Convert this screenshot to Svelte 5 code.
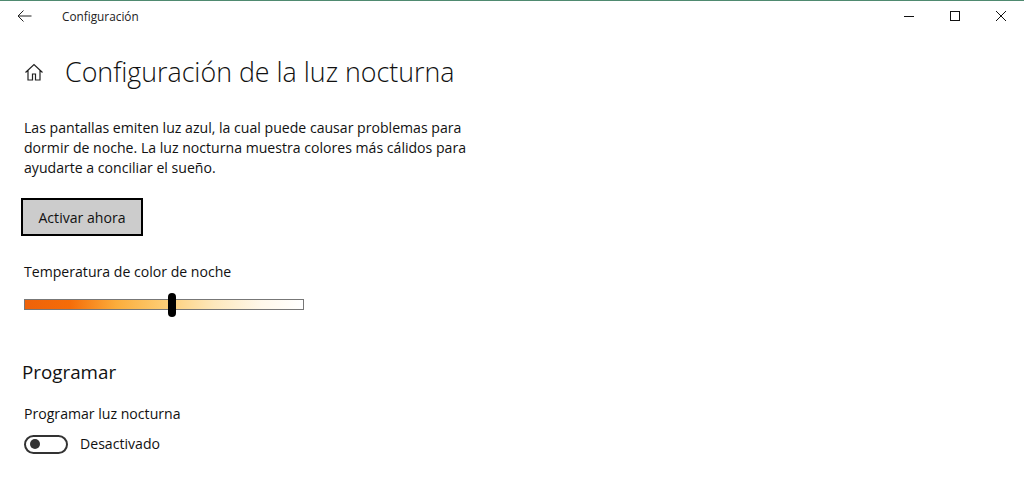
<script>
  const intro = 'Las pantallas emiten luz azul, la cual puede causar problemas para dormir de noche. La luz nocturna muestra colores más cálidos para ayudarte a conciliar el sueño.';
</script>

<div class="win">
  <header class="titlebar">
    <svg class="back" width="15" height="14" viewBox="0 0 15 14"><path d="M6.5 1.5 1 7l5.5 5.5M1 7h13.5" fill="none" stroke="#222" stroke-width="1"/></svg>
    <span class="apptitle">Configuración</span>
    <div class="controls">
      <svg width="12" height="12" viewBox="0 0 12 12"><path d="M1 6.5h10" stroke="#111" stroke-width="1"/></svg>
      <svg width="12" height="12" viewBox="0 0 12 12"><rect x="1.5" y="1.5" width="9" height="9" fill="none" stroke="#111" stroke-width="1"/></svg>
      <svg width="12" height="12" viewBox="0 0 12 12"><path d="M1 1l10 10M11 1 1 11" fill="none" stroke="#111" stroke-width="1"/></svg>
    </div>
  </header>
  <main class="content">
    <div class="heading">
      <svg width="20" height="20" viewBox="0 0 20 20"><path d="M1.5 10.5 10 2.5l8.5 8M4 8.5V18h4.5v-6h3v6H16V8.5" fill="none" stroke="#222" stroke-width="1.2"/></svg>
      <h1>Configuración de la luz nocturna</h1>
    </div>
    <p class="intro">{intro}</p>
    <button class="activate">Activar ahora</button>
    <div class="label temp">Temperatura de color de noche</div>
    <div class="slider"><span class="thumb"></span></div>
    <h2>Programar</h2>
    <div class="label">Programar luz nocturna</div>
    <div class="toggle-row">
      <span class="toggle"><span class="knob"></span></span>
      <span class="label">Desactivado</span>
    </div>
  </main>
</div>

<style>
  :global(body) { background: #fff; }
  .win {
    height: 481px;
    box-sizing: border-box;
    border-top: 1px solid #4f8a70;
    font-family: "Open Sans", "Noto Sans", sans-serif;
    color: #1a1a1a;
    overflow: hidden;
    background: #fff;
  }
  .titlebar {
    display: flex;
    align-items: center;
    height: 30px;
    padding-left: 17px;
  }
  .apptitle { font-size: 11.8px; margin-left: 30px; color: #222; }
  .controls {
    margin-left: auto;
    display: flex;
    gap: 34px;
    padding-right: 17px;
  }
  .content { padding-left: 24px; }
  .heading {
    display: flex;
    align-items: center;
    gap: 21px;
    margin-top: 23px;
  }
  h1 { font-size: 26.8px; font-weight: 300; margin: 0; line-height: 36px; color: #111; }
  .intro {
    width: 450px;
    font-size: 14.1px;
    line-height: 20px;
    margin: 28px 0 0;
    color: #111;
  }
  .activate {
    display: block;
    width: 122px;
    height: 38px;
    margin: 20px 0 0 -3px;
    padding: 0;
    background: #ccc;
    border: 2px solid #000;
    font: inherit;
    font-size: 14.1px;
    color: #111;
  }
  .label { font-size: 14.1px; line-height: 20px; color: #111; }
  .temp { margin-top: 26px; }
  .slider {
    position: relative;
    width: 280px;
    height: 11px;
    box-sizing: border-box;
    margin-top: 17px;
    border: 1px solid #777;
    background: linear-gradient(to right, #ee620a 0%, #f56c08 16%, #fbad3c 33%, #fdcd74 50%, #fde8bc 68%, #fff8ea 85%, #fff 100%);
  }
  .thumb {
    position: absolute;
    left: 143px;
    top: -7px;
    width: 8px;
    height: 24px;
    border-radius: 4px;
    background: #000;
  }
  h2 { font-size: 18.8px; font-weight: 400; margin: 49px 0 0 -2px; line-height: 26px; color: #111; }
  h2 + .label { margin-top: 19px; }
  .toggle-row { display: flex; align-items: center; gap: 12px; margin-top: 10px; }
  .toggle {
    display: flex;
    align-items: center;
    width: 44px;
    height: 19px;
    box-sizing: border-box;
    border: 2px solid #333;
    border-radius: 10px;
    padding-left: 4px;
  }
  .knob { width: 10px; height: 10px; border-radius: 50%; background: #333; }
</style>
